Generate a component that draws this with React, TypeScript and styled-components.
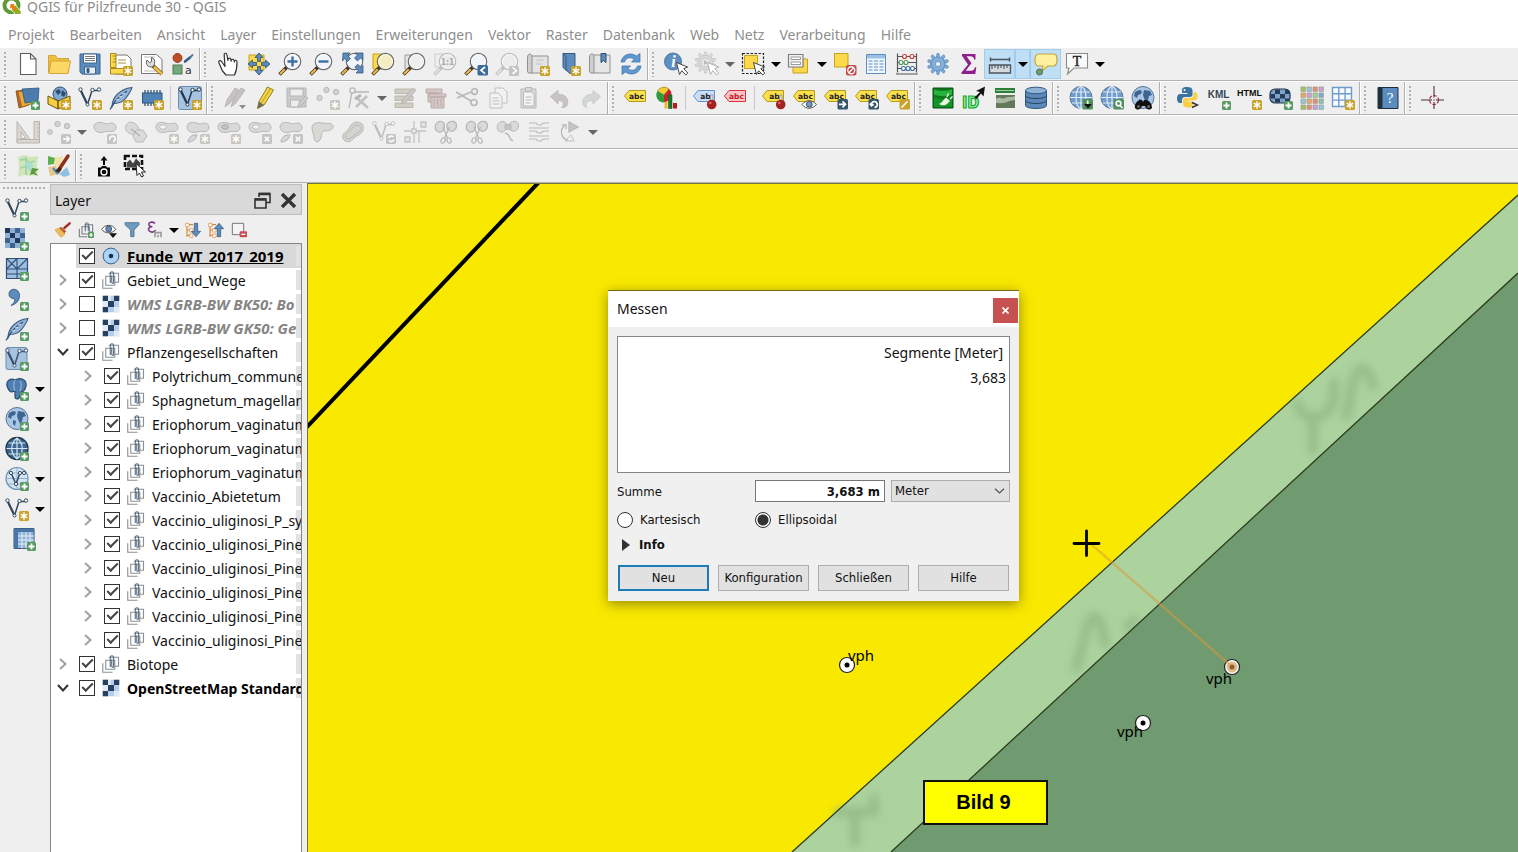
import React from "react";
import styled, { createGlobalStyle, css } from "styled-components";

const ui = `"Noto Sans", "Open Sans", sans-serif`;
const dialogFont = `"DejaVu Sans Condensed", "DejaVu Sans", sans-serif`;

const GlobalStyle = createGlobalStyle`
  *, *::before, *::after { box-sizing: border-box; }
  body { margin: 0; background: #efefef; color: #111; font-family: ${ui}; font-size: 14px; overflow: hidden; }
  button, input, select { font: inherit; color: inherit; margin: 0; }
`;

/* ---------- icon building blocks ---------- */

const BLUE = "#5a8cbe";
const NAVY = "#2f4d6e";
const YEL = "#fcd94a";

const Plus = () => (
  <g>
    <rect x="15" y="15" width="9" height="9" rx="1.5" fill="#589a63" />
    <path d="M19.500 16.500v6M16.500 19.500h6" stroke="#fff" strokeWidth="1.800" />
  </g>
);

const Star = ({ off }: { off?: boolean }) => (
  <g>
    <rect x="14" y="14" width="10" height="10" rx="1.500" fill={off ? "#c9c6bd" : "#c8a22a"} />
    <path
      d="M19 15.200v7.600M15.700 17.100l6.600 3.800M15.700 20.900l6.600-3.800"
      stroke="#fff"
      strokeWidth="1.400"
    />
  </g>
);

const OffBadge = ({ d }: { d: string }) => (
  <g>
    <rect x="14" y="14" width="10" height="10" rx="1.500" fill="#c4c4c4" />
    <path d={d} stroke="#fff" strokeWidth="1.600" fill="none" />
  </g>
);

const Cursor = ({ off }: { off?: boolean }) => (
  <path
    d="M12.500 10.500l3 12 2.300-3.800 4 4.300 2-1.900-4-4.400 3.800-1.700z"
    fill="#fff"
    stroke={off ? "#b0b0b0" : "#444"}
    strokeWidth="1"
    strokeLinejoin="round"
  />
);

const Mag = ({ lens = "#f1f5fb", off }: { lens?: string; off?: boolean }) => (
  <g>
    <path d="M9 15L1.500 22.500" stroke={off ? "#c2c2c2" : "#3a3020"} strokeWidth="3.600" />
    <path d="M6.800 17.200L2 22" stroke={off ? "#dedede" : "#f2b84a"} strokeWidth="2.200" />
    <circle cx="14.500" cy="9.500" r="8.200" fill={lens} stroke={off ? "#bcbcbc" : "#6b6b6b"} strokeWidth="1.200" />
    <circle cx="14.500" cy="9.500" r="6.900" fill="none" stroke="#fff" strokeOpacity=".7" strokeWidth="1" />
  </g>
);

const Tag = ({ text, fill = "#fbe04e", line = "#b59a1c", ink = "#222" }: { text: string; fill?: string; line?: string; ink?: string }) => (
  <g>
    <path d="M.5 10l4.500-5.500h16.500v11H5z" fill={fill} stroke={line} strokeWidth="1" strokeLinejoin="round" />
    <text x="12.500" y="12.500" fontSize="7.500" fontWeight="700" fontFamily='"DejaVu Sans", sans-serif' textAnchor="middle" fill={ink}>
      {text}
    </text>
  </g>
);

const Pin = () => (
  <g>
    <path d="M17.500 16v-7h2.500v7" fill="#ddd" stroke="#888" strokeWidth=".7" />
    <circle cx="18.700" cy="18.500" r="4.800" fill="#a32222" />
    <circle cx="17.300" cy="17" r="1.300" fill="#d66" />
  </g>
);

const DarkBadge = ({ d, fill = "#37566b" }: { d: string; fill?: string }) => (
  <g>
    <rect x="13.500" y="13" width="10.500" height="10.500" rx="1.500" fill={fill} />
    <path d={d} stroke="#fff" strokeWidth="1.700" fill="none" />
  </g>
);

const VShape = ({ c = "#34495e" }: { c?: string }) => (
  <g fill="none" stroke={c}>
    <path d="M2.500 4L9.500 18.500L14 4.500H21" strokeWidth="1.500" />
    <path d="M2.500 4L9.500 18.500" strokeWidth="2.200" />
    <g fill="#fff" strokeWidth="1">
      <circle cx="2.500" cy="3.500" r="1.700" />
      <circle cx="14.500" cy="4" r="1.700" />
      <circle cx="21" cy="3.500" r="1.700" />
      <circle cx="9.500" cy="18.500" r="1.500" />
    </g>
  </g>
);

const Feather = () => (
  <g>
    <path d="M3 21C3 12 10 3 23 1.500C22 6 19 9 17 12C14 16 9 17.500 5 17.500z" fill="#8fb2d6" stroke="#35587c" strokeWidth="1.100" />
    <path d="M1 23.500C4 17 10 10 18 5" fill="none" stroke="#35587c" strokeWidth="1.200" />
    <path d="M7 14l3-.5M10 11l3-.5M13 8l3-.5" stroke="#fff" strokeWidth=".8" />
  </g>
);

const Globe = ({ land }: { land?: boolean }) => (
  <g>
    <circle cx="12" cy="11.500" r="11" fill={land ? "#a9c6e6" : "#6f9ccb"} stroke="#5b7590" strokeWidth="1" />
    {land ? (
      <path
        d="M4 6l4-2 3 1-1 3-3 1-1 3-3-2zM8 13l3 1-1 5-2-2zM13 4l6 1 2 4-3 1-1 4-2 3-2-5-1-3z"
        fill="#3f6690"
      />
    ) : (
      <g fill="none" stroke="#dfeaf5" strokeWidth="1.200">
        <ellipse cx="12" cy="11.500" rx="5" ry="11" />
        <path d="M12 .5v22M1 11.500h22M3 6h18M3 17h18" />
      </g>
    )}
  </g>
);

const Blob = () => (
  <path
    d="M1 7C1 2 7 1.500 12 3.500C15 5 18 1.500 21.500 4C25 8 22 12.500 17 11.500C13 10.500 12 12.500 8 12.500C4 12.500 1 10.500 1 7z"
    fill="#d9d9d9"
    stroke="#b8b8b8"
    strokeWidth="1"
  />
);

const Scissors = () => (
  <g fill="none" stroke="#b5b5b5" strokeWidth="1.200">
    <path d="M2 4c3-4 8-3 8.500 1S8 13 4.500 12 .5 7 2 4zM14 3c3-3 8-2 8.500 2s-3 7-6.500 6-4-5.500-2-8z" fill="#dadada" />
    <path d="M9 7l4.500 11M15.500 7L10.500 18" />
    <ellipse cx="9" cy="20.500" rx="2" ry="2.800" transform="rotate(25 9 20.500)" />
    <ellipse cx="15" cy="20.500" rx="2" ry="2.800" transform="rotate(-25 15 20.500)" />
  </g>
);

const Checker = () => (
  <g>
    <rect x="0" y="1" width="20" height="20" fill="#8fb0d6" />
    {[0, 1, 2, 3].map((r) =>
      [0, 1, 2, 3].map((c) =>
        (r + c) % 2 === 0 ? (
          <rect key={`${r}${c}`} x={c * 5} y={1 + r * 5} width="5" height="5" fill={(r * 3 + c) % 4 ? "#3c648f" : "#1f3956"} />
        ) : null
      )
    )}
  </g>
);

const Gear = ({ fill, line }: { fill: string; line: string }) => (
  <g fill={fill} stroke={line} strokeWidth=".8">
    {[0, 36, 72, 108, 144, 180, 216, 252, 288, 324].map((a) => (
      <path key={a} d="M10.200 6l.8-4.500h2l.8 4.500z" transform={`rotate(${a} 12 12)`} />
    ))}
    <circle cx="12" cy="12" r="7" />
    <circle cx="12" cy="12" r="2.600" fill="#efefef" />
  </g>
);

const icons: Record<string, React.ReactNode> = {
  newProject: <path d="M4.500 1.500h10l5.500 5.500v15.500H4.500zM14.500 1.500V7H20" fill="#fff" stroke="#5e5e5e" strokeWidth="1.100" />,
  open: (
    <g stroke="#cf9f2c" strokeWidth=".9" strokeLinejoin="round">
      <path d="M1.500 3.500h7l2 3h11v14h-20z" fill="#f0bf3f" />
      <path d="M2 21.500L4 9h19.500l-2.500 12.500z" fill="#fdd866" />
    </g>
  ),
  save: (
    <g stroke="#3b658f" strokeWidth="1">
      <path d="M2 2h20v20H4l-2-2z" fill={BLUE} />
      <path d="M5.500 2h13v9h-13z" fill="#fff" />
      <path d="M7 4.500h10M7 6.500h10M7 8.500h10" stroke="#777" />
      <path d="M6.500 15h11v7h-11z" fill="#e7edf4" />
      <path d="M9 16.500h2v4H9z" fill={NAVY} />
    </g>
  ),
  layoutNew: (
    <g>
      <path d="M6 3h12l4 4v15H6z" fill="#fff" stroke="#777" />
      <path d="M1.500 1.500h5.500v14h-5.500z" fill={YEL} stroke="#a88a1c" />
      <path d="M1.500 16.500h16v5.500h-16z" fill={YEL} stroke="#a88a1c" />
      <path d="M3.500 4h3.500M4.500 7h2.500M3.500 10h3.500M9 8h8M9 11h8" stroke="#8b7520" strokeWidth=".8" />
      <Star />
    </g>
  ),
  layoutManager: (
    <g>
      <path d="M1.500 2.500h15l5.500 5v14h-20.500z" fill="#fff" stroke="#777" />
      <path d="M4 5h11M4 19h13" stroke="#bbb" />
      <path d="M13 14l9 8" stroke="#7d5b12" strokeWidth="4" />
      <path d="M14 15l8 7" stroke="#f1c34d" strokeWidth="2.400" />
      <path d="M7 8a4.500 4.500 0 0 0 4 7l2.500-.5 1-3a4.500 4.500 0 0 0-3-6v4l-2 1.200z" fill="#dcdcdc" stroke="#555" strokeWidth=".9" />
    </g>
  ),
  styles: (
    <g>
      <circle cx="6.500" cy="6" r="4.400" fill="#c14d27" stroke="#8b3114" />
      <path d="M14 9.500l5-4" stroke="#345b87" strokeWidth="2.600" strokeLinecap="round" />
      <path d="M18.500 6l3.500-3.500" stroke="#4c78a6" strokeWidth="1.800" />
      <rect x="2" y="13" width="9" height="9" fill="#76a77b" stroke="#4f7d55" />
      <text x="14" y="22" fontSize="11" fontFamily='"DejaVu Sans", sans-serif' fill="#333">a</text>
    </g>
  ),
  pan: (
    <path
      d="M9 14.500L5.500 9.500C4 7.500 2 9 3 11l3.500 8 3.500 4h8.500c2-4 2.500-8 2.500-12.500 0-3-2.500-2.800-2.700-.5 0-3.500-3-3.500-3.200-.8 0-4-3-3.800-3.200-.7L11 3C10.700.5 8 .8 8.200 3z"
      fill="#fff"
      stroke="#333"
      strokeWidth="1.200"
      strokeLinejoin="round"
    />
  ),
  panSelection: (
    <g>
      <path d="M2 3h15v15H2z" fill={YEL} stroke="#c3a31f" />
      <path
        d="M12 1l4 4.500h-2.500v4h-3v-4H8zM12 23l-4-4.500h2.500v-4h3v4H16zM1 12l4.500-4v2.500h4v3h-4V16zM23 12l-4.500-4v2.500h-4v3h4V16z"
        fill={BLUE}
        stroke={NAVY}
        strokeWidth=".8"
      />
    </g>
  ),
  zoomIn: <g><Mag /><path d="M14.500 4.500v10M9.500 9.500h10" stroke="#3d6fa3" strokeWidth="2.400" /></g>,
  zoomOut: <g><Mag /><path d="M9.500 9.500h10" stroke="#3d6fa3" strokeWidth="2.400" /></g>,
  zoomFull: (
    <g>
      <Mag />
      <path
        d="M3 1h7L7.500 3.500l3 3-3 3-3-3L2.500 9zM23 1v7l-2.500-2-3 3-3-3 3-3L15 1zM23 21h-7l2.300-2.300-3.500-3.500 3-3 3.500 3.500L23 13.500z"
        fill={BLUE}
        stroke={NAVY}
        strokeWidth=".7"
      />
    </g>
  ),
  zoomSelection: <g><path d="M2 2h12v15H2z" fill={YEL} stroke="#c3a31f" /><Mag lens="#f5edc0" /></g>,
  zoomLayer: <g><path d="M3 3h12v14H3z" fill="#e4e4e4" stroke="#999" /><Mag lens="#eeeeee" /></g>,
  zoomNative: (
    <g>
      <path d="M2 2h10v13H2z" fill="none" stroke="#ccc" />
      <Mag off lens="#ececec" />
      <text x="14.500" y="12.500" fontSize="8.500" fontWeight="700" textAnchor="middle" fontFamily='"DejaVu Sans Condensed", sans-serif' fill="#aaa">1:1</text>
    </g>
  ),
  zoomLast: <g><Mag /><DarkBadge fill="#3c6c9c" d="M21 15l-4 3.300 4 3.300" /></g>,
  zoomNext: <g><Mag off lens="#ececec" /><OffBadge d="M17.500 15.500l4 3.200-4 3.200" /></g>,
  newMap: (
    <g stroke="#909090">
      <path d="M5 4h17v17H5z" fill="#e3e3e3" />
      <path d="M1.500 5.500C1.500 1 6 1 6 5v16H3c-2 0-1.500-3-1.500-4z" fill="#cfcfcf" />
      <path d="M10 8h8M10 12h6" stroke="#c4c4c4" />
      <g stroke="none"><Star /></g>
    </g>
  ),
  newBookmark: <g><path d="M6 1.500h12v18l-5 2-7-6z" fill={BLUE} stroke={NAVY} strokeWidth=".9" /><path d="M6 1.500l3 3v14" fill="none" stroke={NAVY} strokeWidth=".8" /><Star /></g>,
  bookmarks: (
    <g stroke="#909090">
      <path d="M5 3h17v18H5z" fill="#e6e6e6" />
      <path d="M1.500 5C1.500 1 6 1 6 5v16H3c-2 0-1.500-3-1.500-4z" fill="#cfcfcf" />
      <path d="M13 1.500h5v9l-2.500-2-2.500 2z" fill={BLUE} stroke={NAVY} />
    </g>
  ),
  refresh: (
    <g fill="#5f97cf" stroke="#386ea6" strokeWidth=".7" strokeLinejoin="round">
      <path d="M2 10C3 3 11-.5 17.500 4L21 1.500V10h-8.500l2.700-2.700C11.500 4.500 7 5.500 5.500 10z" />
      <path d="M22 14c-1 7-9 10.500-15.500 6L3 22.500V14h8.500l-2.700 2.700c3.700 2.800 8.200 1.800 9.700-2.700z" />
    </g>
  ),
  identify: (
    <g>
      <circle cx="9" cy="9.500" r="8.500" fill="#5f8fc2" stroke="#4a77a8" />
      <text x="9.500" y="15" fontSize="16" fontStyle="italic" fontWeight="700" textAnchor="middle" fontFamily='"Liberation Serif", serif' fill="#fff">i</text>
      <Cursor />
    </g>
  ),
  action: (
    <g>
      <g transform="translate(-1.500 -1.500)"><Gear fill="#dedede" line="#c3c3c3" /></g>
      <circle cx="10.500" cy="10.500" r="4.500" fill="#e9e9e9" stroke="#c3c3c3" />
      <path d="M9 8l4 2.500L9 13z" fill="#bbb" />
      <Cursor off />
    </g>
  ),
  select: (
    <g>
      <path d="M3.500 3.500h13v13h-13z" fill={YEL} stroke="#c3a31f" />
      <path d="M1.500 1.500h21v20h-21z" fill="none" stroke="#222" strokeWidth="1.200" strokeDasharray="2.500 1.500" />
      <Cursor />
    </g>
  ),
  selectForm: (
    <g>
      <path d="M6 7h14.500v14H6z" fill={YEL} stroke="#c3a31f" />
      <path d="M1.500 2.500h14.500v12.500H1.500z" fill="#f3f3f3" stroke="#7d7d7d" strokeWidth="1.200" />
      <path d="M4 5h9.500v2.500H4zM4 10h9.500v2.500H4z" fill="#fff" stroke="#999" />
    </g>
  ),
  deselect: (
    <g>
      <path d="M1.500 1.500h13.500v13.500H1.500z" fill={YEL} stroke="#c3a31f" />
      <rect x="13" y="13" width="10.500" height="10.500" rx="2" fill="#c84a4a" />
      <circle cx="18.250" cy="18.250" r="3.500" fill="none" stroke="#fff" strokeWidth="1.300" />
      <path d="M15.800 20.700l5-5" stroke="#fff" strokeWidth="1.300" />
    </g>
  ),
  table: (
    <g>
      <path d="M2.500 2.500h19v19h-19z" fill="#f2f7fd" stroke="#5a8cbe" />
      <path d="M3 3h18v3.500H3z" fill="#9cc0e6" />
      <path d="M4.500 9h4M10 9h4M15.500 9h4M4.500 12h4M10 12h4M15.500 12h4M4.500 15h4M10 15h4M15.500 15h4M4.500 18h4M10 18h4M15.500 18h4" stroke="#5a8cbe" strokeWidth="1.200" />
    </g>
  ),
  abacus: (
    <g fill="none" strokeWidth="1.100">
      <path d="M2.500 1.500v19M21.500 1.500v19M1 22h22M3 4.500h18M3 10.500h18M3 16.500h18" stroke="#555" strokeWidth="1.200" />
      <g stroke="#c33" fill="#fff"><circle cx="9.500" cy="4.500" r="2" /><circle cx="17" cy="4.500" r="2" /></g>
      <g stroke="#4a9a50" fill="#fff"><circle cx="6" cy="10.500" r="2" /><circle cx="11" cy="10.500" r="2" /></g>
      <g stroke="#3c6c9c" fill="#fff"><circle cx="8.500" cy="16.500" r="2" /><circle cx="13" cy="16.500" r="2" /><circle cx="17.500" cy="16.500" r="2" /></g>
    </g>
  ),
  gear: <Gear fill="#82aeda" line="#5d8bbb" />,
  sigma: <path d="M5 2h13.500v5.500h-1.300c-.5-2.500-1.500-3.200-4-3.200H9.500l5 7-5.800 7.400h5c2.600 0 3.600-1 4.300-3.500h1.300L18.300 22H4.500v-1.500l6.500-8-6-8.700z" fill="#8f1f8f" />,
  measure: (
    <g stroke="#4c555e" fill="none">
      <path d="M2.500 7.500h19M2.500 5.500v4M21.500 5.500v4" strokeWidth="1.500" />
      <path d="M1.500 13h21v8h-21z" fill="#d5dade" strokeWidth="1.400" />
      <path d="M4 13v4M7 13v3M10 13v4M13 13v3M16 13v4M19 13v3" strokeWidth="1.100" />
    </g>
  ),
  mapTip: (
    <g>
      <path d="M5 2h14c4 0 4 2 4 6s-1 6-4 6h-5l-6 5 1-5H5c-3 0-4-2-4-6s1-6 4-6z" fill="#fff0a0" stroke="#c0a63c" strokeWidth="1.200" />
      <circle cx="5.500" cy="20" r="3" fill="#6f9c70" stroke="#47724b" />
    </g>
  ),
  annotation: (
    <g>
      <path d="M1.500 1.500h21v14.500H9l-6.500 6L4 16H1.500z" fill="#fafafa" stroke="#8b8b8b" strokeWidth="1.100" />
      <text x="12" y="13.500" fontSize="14" textAnchor="middle" fontFamily='"Liberation Serif", serif' fill="#222" stroke="#222" strokeWidth=".4">T</text>
    </g>
  ),
  sources: (
    <g strokeWidth=".8">
      <path d="M0 5l11-1 2 15-10 3z" fill="#c0632a" stroke="#7c4a14" />
      <path d="M2 6l12-3 4 14-12 4z" fill="#eaa93a" stroke="#9a6a18" />
      <path d="M6 3l17-1-1 13-13 2z" fill="#4c7cae" stroke="#2e567f" />
      <Plus />
    </g>
  ),
  geopackage: (
    <g>
      <circle cx="13" cy="8" r="7" fill="#7fa8d3" stroke={NAVY} />
      <path d="M8 5l4-2 2 3-3 3zM15 4l4 3-2 4-3-2z" fill={NAVY} />
      <path d="M1 10l10 5v8L1 18zM11 15l12-5v8l-12 5z" fill="#f3cf3e" stroke="#6b5510" strokeWidth="1" />
      <Star />
    </g>
  ),
  newVector: <g><VShape /><Star /></g>,
  newFeather: <g><Feather /><Star /></g>,
  chip: (
    <g>
      <path d="M5 4v16M8 4v16M11 4v16M14 4v16M17 4v16M20 4v16" stroke="#34526f" strokeWidth="1.300" />
      <rect x="2.500" y="7" width="19.500" height="10" fill="#4f82b6" stroke="#2e567f" />
      <Star />
    </g>
  ),
  virtualNew: (
    <g>
      <rect x=".5" y=".5" width="23" height="23" rx="2" fill="#a8c3df" stroke="#6a8cae" />
      <VShape c="#203a56" />
      <Star />
    </g>
  ),
  pencilsOff: (
    <g fill="#c6c2c2" stroke="#b3aeae" strokeWidth=".8">
      <path d="M2 21l2-7 8-12 4 2-9 13z" />
      <path d="M8 21l2-7 8-12 4 2-9 13z" />
      <path d="M16 19h7l-3.500 4z" fill="#8c8c8c" stroke="none" />
    </g>
  ),
  pencil: (
    <g>
      <path d="M3.500 22.500l1.500-7L13.500 1l6 3L10 19z" fill="#f5d849" stroke="#8f7a1d" strokeWidth="1" />
      <path d="M7.500 17L16.500 2.500" stroke="#c3a31f" strokeWidth="1.200" />
      <path d="M3.500 22.500l1.500-7 5 3.500z" fill="#6b6b5b" />
    </g>
  ),
  saveOff: (
    <g stroke="#b5b5b5">
      <path d="M2 2h19v19H2z" fill="#cbcbcb" />
      <path d="M5 3h13v7H5zM5.500 14h9v7h-9z" fill="#ededed" />
      <path d="M13 21l1-4 6-7 3 2-6 7z" fill="#d2c8c8" />
    </g>
  ),
  pointsOff: (
    <g fill="#d2d2d2" stroke="#bbb">
      <circle cx="3.500" cy="12" r="2.700" /><circle cx="10.500" cy="4" r="2.700" /><circle cx="20" cy="6" r="2.700" />
      <g stroke="none"><Star off /></g>
    </g>
  ),
  vertexOff: (
    <g fill="none" stroke="#b6b6b6" strokeWidth="1.300">
      <path d="M2 22L5 6h17" /><circle cx="5.500" cy="4.500" r="2.700" fill="#eee" />
      <path d="M9 21L20 10M10 12l11 10" strokeWidth="2.600" stroke="#c4c0c0" />
      <path d="M8 13l6-4" strokeWidth="3" />
    </g>
  ),
  multiOff: (
    <g fill="#d0cdc2" stroke="#b8b4a8" strokeWidth=".9">
      <path d="M2 3h18v4.500H2zM2 10h18v4.500H2zM2 17h18v4.500H2z" />
      <path d="M8 18l2-5L20 2l3 2-10 12z" fill="#c9c6c6" />
    </g>
  ),
  trashOff: (
    <g fill="#d5c6c6" stroke="#bdabab" strokeWidth="1">
      <path d="M2 3h16v4H2zM4 7h10v9H4z" /><path d="M5 8h17v3H5zM7 11h13v11H7z" /><path d="M10 13v7M13.500 13v7M17 13v7" />
    </g>
  ),
  cutOff: (
    <g fill="none" stroke="#b9b9b9" strokeWidth="1.700">
      <path d="M1 6l15 9M2 12l14-6" /><circle cx="19.500" cy="5.500" r="2.800" /><circle cx="19" cy="16.500" r="3" />
    </g>
  ),
  copyOff: (
    <g fill="#f2f2f2" stroke="#bfbfbf">
      <path d="M9 2h8l4 4v11H9z" /><path d="M4 7h8l4 4v11H4z" /><path d="M6.500 12h6M6.500 15h7M6.500 18h7" />
    </g>
  ),
  pasteOff: (
    <g fill="#d9d9d9" stroke="#b9b9b9">
      <path d="M4 3h15v19H4z" /><path d="M6.500 6h8l2.500 2.500V20h-10.500z" fill="#f4f4f4" /><path d="M8.500 1.500h6v3.500h-6z" /><path d="M8.500 11h6M8.500 14h6M8.500 17h5" />
    </g>
  ),
  undoOff: <path d="M2.500 10.500L10 4.500v4c8-.5 10.500 4 9.500 10-1 2.500-3.500 3.500-6 3 3.500-3 2.500-7-3.500-7v3.500z" fill="#c9c4c4" stroke="#bab4b4" strokeWidth=".8" />,
  redoOff: <path d="M21.500 10.500L14 4.500v4c-8-.5-11 4-10 10 .5 1.500 2 2.500 3.500 3-1.500-4.500 1-7 6.500-7v3.500z" fill="#d2d6d4" stroke="#c2c6c4" strokeWidth=".8" />,
  label: <Tag text="abc" />,
  diagram: (
    <g>
      <path d="M9 9L2.500 5A7.500 7.500 0 0 1 14 3z" fill="#f2cf2c" stroke="#8a7414" strokeWidth=".6" />
      <path d="M9 9l5-6a7.500 7.500 0 0 1-5 13z" fill="#c42626" />
      <path d="M9 9v7.500A7.500 7.500 0 0 1 2.500 5z" fill="#2f9a3d" />
      <path d="M9.500 16h3v6.500h-3z" fill="#f2b52c" /><path d="M13.500 9h3.500v13.500h-3.500z" fill="#187a2d" stroke="#0d4f1b" strokeWidth=".5" /><path d="M18 17h4v5.500h-4z" fill="#b01d1d" />
    </g>
  ),
  labelPinBlue: <g><Tag text="ab " fill="#c8defa" line="#5f93cc" /><Pin /></g>,
  labelRed: <Tag text="abc" fill="#ffc3c3" line="#dc2f3c" ink="#c2202c" />,
  labelPin: <g><Tag text="ab " /><Pin /></g>,
  labelEye: (
    <g>
      <Tag text="abc" />
      <path d="M9 18.500c4-5 10-5 14.500 0-4.500 5-10.500 5-14.500 0z" fill="#fff" stroke="#555" />
      <circle cx="16.300" cy="18.300" r="2.900" fill="#6e9bc9" stroke="#333" strokeWidth=".8" />
    </g>
  ),
  labelMove: <g><Tag text="abc" /><DarkBadge d="M15 18.300h6M18.500 15.300l3 3-3 3" /></g>,
  labelRotate: <g><Tag text="abc" /><DarkBadge d="M16.500 19.500a3 3 0 1 1 3 2M14.800 17.500l1.700 2.300 2-1.500" /></g>,
  labelEdit: <g><Tag text="abc" /><DarkBadge fill="#c8a22a" d="M15.500 21.500l6-6" /></g>,
  dbPlug: (
    <g>
      <path d="M2 2h20v20H2z" fill="#0d7a1c" stroke="#0a4f13" />
      <path d="M3 3.500c6 2 12 2 18 0v5c-6 2-12 2-18 0z" fill="#27b43c" />
      <path d="M3 11.500c6 2 12 2 18 0V21H3z" fill="#149329" />
      <path d="M8 18c2-1 3-2 4.500-4l2.500-2.500 4 3.500-3 3c-2 1.500-5 2-8 0z" fill="#e9f7dc" /><path d="M16 11l1.500-3.500M19 13l2.500-2.500" stroke="#e9f7dc" strokeWidth="1.400" />
    </g>
  ),
  idTool: (
    <g>
      <text x="0" y="21.500" fontSize="16" fontWeight="700" fontFamily='"DejaVu Sans Condensed", sans-serif' fill="#8ff09a" stroke="#0fa52a" strokeWidth="1.100">ID</text>
      <path d="M12 12l6-6-4-1 9-4.500-1.500 10-2.500-3-4.500 5.500z" fill="#111" />
    </g>
  ),
  photo: (
    <g>
      <path d="M2 2h20v5H2z" fill="#2e7d39" /><path d="M2 7h20v3H2z" fill="#e9eee6" /><path d="M3 9h19v13H3z" fill="#63795a" />
      <path d="M3 13c4-3 6 1 9-1s6 0 10-2v4c-6 0-8 4-19 3z" fill="#a9b8a0" /><path d="M3 4.500h18" stroke="#9bd09f" />
    </g>
  ),
  database: (
    <g fill="#5b88b8" stroke="#33587e" strokeWidth="1">
      <path d="M1.500 4.500v15c0 4 21 4 21 0v-15z" /><ellipse cx="12" cy="4.500" rx="10.500" ry="3.300" fill="#8fb2d8" />
      <path d="M1.500 9.500c0 4 21 4 21 0M1.500 14.500c0 4 21 4 21 0" fill="none" stroke="#27435f" />
    </g>
  ),
  globeDown: <g><Globe /><DarkBadge fill="#4e8f5c" d="M18.700 14.500v4" /><path d="M15 18h8l-4 4.500z" fill="#111" /></g>,
  globeSearch: <g><Globe /><DarkBadge fill="#4e8f5c" d="M20 19.500l2.500 2.500M20.800 17.500a2.300 2.300 0 1 1-4.600 0 2.300 2.300 0 0 1 4.600 0z" /></g>,
  globeBinocular: (
    <g>
      <Globe land />
      <path d="M4 22c-1-4 3-8 5-8h2l1 2 1-2h2c3 0 6 4 6 8-2 2.500-6 2-7-2h-3c-1 4-5 4.500-7 2z" fill="#111" />
      <circle cx="7.500" cy="20.500" r="1.500" fill="#666" /><circle cx="17.500" cy="20.500" r="1.500" fill="#666" />
    </g>
  ),
  python: (
    <g>
      <path d="M11 1C6 1 6 3 6 4.500V7h5.500v1H4C1.500 8 1 11 1 12.500 1 15 2 17 4 17h2v-3c0-2 1.500-3 3-3h5c1.500 0 2.500-1 2.500-2.500v-4C16.500 2 14.500 1 11 1z" fill="#3b72a4" />
      <circle cx="8.500" cy="4" r="1" fill="#fff" />
      <path d="M12 21.500c5 0 5-2 5-3.500v-2.500h-5.500v-1H18c2.500 0 3.500-2 3.500-4.500 0-2.500-1-4-3-4h-1v3c0 2-1.500 3-3 3h-5C8 12 7 13 7 14.500V18c0 2.500 2 3.500 5 3.500z" fill="#f9cf45" />
      <path d="M16 16.500l5.500 2.500-5.500 2.500" fill="none" stroke="#333" strokeWidth="1.400" />
    </g>
  ),
  kml: (
    <g>
      <text x="11.500" y="12" fontSize="10" fontWeight="700" textAnchor="middle" fontFamily='"Liberation Sans", sans-serif' fill="#34465a">KML</text>
      <Plus />
    </g>
  ),
  html: (
    <g>
      <text x="11.500" y="10" fontSize="9" fontWeight="700" textAnchor="middle" fontFamily='"Liberation Sans", sans-serif' fill="#111">HTML</text>
      <Star />
    </g>
  ),
  tiles: (
    <g>
      <rect x="1" y="3" width="20" height="14" rx="5" fill="#7fa2c9" stroke="#21364f" strokeWidth="1.200" />
      <path d="M6 3.500h5V8H6zM16 3.500h2c1.500 0 2.500 2 2.500 4.500H16zM1.500 8H6v4.500H1.500zM11 8h5v4.500h-5zM6 12.500h5v4H6zM16 12.500h4.500c0 3-2 4-4.500 4z" fill="#243d5c" />
      <Plus />
    </g>
  ),
  palette: (
    <g>
      {["#a3c45a", "#8fc9e8", "#e88d73", "#c9a0e0", "#f0a65f", "#c9a0e0", "#9fd49a", "#7ba9e0", "#8fc9e8", "#f0a65f", "#e88d73", "#84c6c0", "#a3c45a", "#e88d73", "#c9a0e0", "#8fc9e8"].map((c, i) => (
        <rect key={i} x={1 + (i % 4) * 6} y={1 + Math.floor(i / 4) * 6} width="4.300" height="4.300" fill={c} stroke="#9a9a8a" strokeWidth=".7" />
      ))}
    </g>
  ),
  gridNew: <g><path d="M1.500 1.500h19v19h-19zM1.500 7.800h19M1.500 14.100h19M7.800 1.500v19M14.100 1.500v19" fill="#f7fbff" stroke="#6f9ccb" strokeWidth="1.400" /><Star /></g>,
  help: (
    <g>
      <path d="M2 1.500h20v21H2z" fill="#5a8cbe" stroke="#1f2f40" /><path d="M2 1.500h4.500v21H2z" fill="#22313f" />
      <text x="14" y="17" fontSize="15" textAnchor="middle" fontFamily='"Liberation Serif", serif' fill="#fff">?</text>
    </g>
  ),
  crosshair: (
    <g fill="none">
      <circle cx="13" cy="14" r="4.500" stroke="#a83244" strokeWidth="1.200" strokeDasharray="3.500 1.500" />
      <path d="M0 14h11M15 14h8M13 0v11.500M13 16v7" stroke="#4a3535" strokeWidth="1.100" />
      <circle cx="13" cy="14" r=".8" fill="#a83244" />
    </g>
  ),
  squareOff: (
    <g fill="#dbd6d0" stroke="#b8b4b0">
      <path d="M1 1.500L16 22H1zM5 11.500l5 7H5z" fillRule="evenodd" /><path d="M1 19.500h22.500V23H1zM18 1.500h5.500v18H18z" /><path d="M21 4h2.500M21 8h2.500M21 12h2.500M21 16h2.500" />
    </g>
  ),
  movePointsOff: (
    <g fill="#d2d2d2" stroke="#bbb">
      <circle cx="3" cy="12" r="2.400" /><circle cx="10.500" cy="4" r="2.700" /><circle cx="20" cy="6" r="2.700" />
      <g stroke="none"><OffBadge d="M16 19h6M19.500 16.300l2.700 2.700-2.700 2.700" /></g>
    </g>
  ),
  blobRotate: <g><Blob /><OffBadge d="M17 20a2.800 2.800 0 1 1 3 1.500" /></g>,
  blobSimplify: (
    <g fill="#dadada" stroke="#bababa">
      <path d="M2 10C0 5 5 0 10 3c4 2 4 5 7 8 2 3-2 8-6 5-3-2-7-2-9-6z" /><path d="M12 10h7l4 6-4 6h-7l-3-6z" /><path d="M7 9l9 7" stroke="#999" />
    </g>
  ),
  blobRing: <g><Blob /><ellipse cx="8" cy="7" rx="3.500" ry="2.300" fill="#f3f3f3" stroke="#bbb" /><Star off /></g>,
  blobPart: <g><Blob /><path d="M2 22c0-4 4-8 9-7-1 4-4 7-9 7z" fill="#d6d6d6" stroke="#b3b3b3" /><Star off /></g>,
  blobFill: <g><Blob /><ellipse cx="8" cy="7" rx="3.500" ry="2.300" fill="#c4c4c4" stroke="#aaa" /><Star off /></g>,
  blobRingDel: <g><Blob /><ellipse cx="8" cy="7" rx="3.500" ry="2.300" fill="#f3f3f3" stroke="#bbb" /><OffBadge d="M16.800 16.800l4.400 4.400M21.200 16.800l-4.400 4.400" /></g>,
  blobPartDel: <g><Blob /><path d="M2 22c0-4 4-8 9-7-1 4-4 7-9 7z" fill="#d6d6d6" stroke="#b3b3b3" /><OffBadge d="M16.800 16.800l4.400 4.400M21.200 16.800l-4.400 4.400" /></g>,
  reshape: <path d="M2 8c0-5 5-6 10-5 4 1 10-1 11 3 1 4-5 5-9 5-3 1-2 5-4 9-3 4-6 1-6-3 0-3-2-5-2-9z" fill="#d8d8d4" stroke="#b8b8b5" />,
  offset: (
    <g fill="#d4d4d0" stroke="#b8b8b5">
      <path d="M3 20c-4-5 2-8 4-10 2-3 4-8 9-8 6 0 8 6 5 10s-5 3-8 6c-3 4-7 5-10 2z" />
      <path d="M5 18c-2-3 2-5 4-7 2-3 4-6 7-6 4 0 5 4 3 6s-5 3-7 5c-3 3-5 4-7 2z" />
    </g>
  ),
  splitV: <g><VShape c="#bdbdbd" /><OffBadge d="M16.500 18a3 3 0 0 1 5-1M22 19.500a3 3 0 0 1-5 1" /></g>,
  splitCross: (
    <g fill="none" stroke="#c2c2c2" strokeWidth="1.300">
      <path d="M1 11h22M11 1v22M16 11v12" /><path d="M9 9h4v4H9z" fill="#efefef" /><path d="M18 2h5v5h-5zM2 17h5v5H2z" fill="#e4e4e4" />
    </g>
  ),
  splitFeatures: <Scissors />,
  mergeOff: (
    <g fill="#dadada" stroke="#b9b9b9">
      <path d="M2 4c3-4 8-3 8.500 1S8 13 4.500 12 .5 7 2 4zM14 3c3-3 8-2 8.500 2s-3 7-6.500 6-4-5.500-2-8z" /><path d="M9 4.500h6v5H9z" fill="#c5c5c5" /><path d="M9 13c6 1 3 6 8 8" fill="none" strokeWidth="1.500" />
    </g>
  ),
  mergeAttr: <path d="M2 3h7l2 2h3l2-2h6M2 8h20M2 11h7l2 2h3l2-2h6M2 16h20M2 19h7l2 2h3l2-2h6" fill="none" stroke="#b9b9b9" strokeWidth="1.200" />,
  rotateSym: (
    <g fill="none" stroke="#b9b9b9" strokeWidth="1.300">
      <path d="M10 20C3 19 1 10 7 5" /><path d="M4 5h4v4" /><path d="M11 2v10l9-5z" fill="#c6c6c6" /><path d="M7 21h9l-3-6z" strokeWidth=".8" />
    </g>
  ),
  osm: (
    <g>
      <path d="M2 3l6-2 7 2 7-1-1 10 1 9-8 1-6-1-6 2 1-11z" fill="#cfe6bb" />
      <path d="M4 6l6-1 3 4 6-2M4 14l7-2 5 5M10 3v18" fill="none" stroke="#a3d3a6" strokeWidth="1.800" />
      <path d="M9 8l7 1 2 6-6 1z" fill="#aadfd4" />
      <path d="M14 21l2-7 7 1-4 3 3 4-5-2z" fill="#5f9a43" />
    </g>
  ),
  mapPaint: (
    <g>
      <path d="M1 2l7 2-1 6-6 1z" fill="#5bb04c" /><path d="M8 4l8-2-2 9-7 2z" fill="#f3e0a4" /><path d="M1 13l8-1 4 8-10 2z" fill="#e9c58c" />
      <path d="M12 20l8-7 3 8-6 2z" fill="#8fc0e4" /><path d="M6 14l5 6" stroke="#4a8fcc" strokeWidth="2.500" />
      <path d="M13 14l8-12" stroke="#8c2f1a" strokeWidth="3.500" strokeLinecap="round" /><path d="M8 17l4-4 3 2-3 4z" fill="#3f2417" />
    </g>
  ),
  camera: (
    <g fill="#0a0a0a">
      <path d="M12 2l3.500 4.500h-2.500V11h-2V6.500H8.500z" /><path d="M6 13.500h3l1-1.500h4l1 1.500h3v9H6z" />
      <circle cx="12" cy="18" r="3" fill="none" stroke="#fff" strokeWidth="1.300" />
    </g>
  ),
  snapshot: (
    <g>
      <path d="M2 2h17v13H2z" fill="none" stroke="#111" strokeWidth="2.600" strokeDasharray="5 2" />
      <path d="M4 13.500v-5l3-3 3 4 3-5 4 4v5z" fill="#444" />
      <path d="M13 9.500l1 12 2.500-2.500 2 4 2-1-2-4h4z" fill="#fff" stroke="#222" strokeLinejoin="round" />
    </g>
  ),
  addVector: <g><VShape /><Plus /></g>,
  addRaster: <g><Checker /><Plus /></g>,
  addMesh: (
    <g>
      <path d="M1.500 1.500h21v20h-21z" fill="#9fbfe0" stroke="#2e4f73" strokeWidth="1.200" />
      <path d="M1.500 12h21M12 1.500v20M1.500 1.500L12 12L22.500 1.500M1.500 12L12 1.500M1.500 17h21" fill="none" stroke="#2e4f73" strokeWidth="1.100" />
      <Plus />
    </g>
  ),
  addDelimited: <g><path d="M4 7c0-6.500 10.500-6.500 10.500 1.500 0 6-4.500 9-8.500 10 3.500-3 4.500-5 3-7-2.500 0-5-1-5-4.500z" fill={BLUE} stroke={NAVY} strokeWidth=".8" /><Plus /></g>,
  addFeather: <g><Feather /><Plus /></g>,
  addVirtual: <g><rect x="1" y=".5" width="21" height="22" rx="2" fill="#a8c3df" stroke="#6a8cae" /><VShape c="#3a5470" /><Plus /></g>,
  addPostgis: (
    <g>
      <path d="M2 9c-1-6 4-8 8-6 5-3 12-1 11 6-1 4-3 6-5 6l-1 4c-1 4-5 4-5 0v-5l-3 1c-3 0-4-3-5-6z" fill="#4f7fb2" stroke="#2a4a6c" strokeWidth="1.200" />
      <path d="M10 3c-2 4-1 8 0 11M15 4c2 3 1 7 0 10" fill="none" stroke="#a8c3df" />
      <Plus />
    </g>
  ),
  addGlobe: <g><Globe land /><Plus /></g>,
  addWms: (
    <g>
      <circle cx="12" cy="11.500" r="11" fill="#3b668f" stroke="#20384f" strokeWidth="1.400" />
      <path d="M12 1v21M1.500 11.500h21M3.500 6h17M3.500 17h17M12 1c-7 6-7 15 0 21M12 1c7 6 7 15 0 21" fill="none" stroke="#d5e4f2" strokeWidth="1.200" />
      <Plus />
    </g>
  ),
  addWfs: (
    <g>
      <circle cx="12" cy="11.500" r="11" fill="#d3e3f4" stroke="#6f93b8" strokeWidth="1.200" />
      <path d="M12 1v21M1.500 11.500h21M3.500 6h17M3.500 17h17" fill="none" stroke="#8fb0d2" />
      <path d="M6 6l5 11 4-11h3" fill="none" stroke="#34495e" strokeWidth="1.500" />
      <g fill="#fff" stroke="#34495e"><circle cx="6" cy="6" r="1.600" /><circle cx="15" cy="6" r="1.600" /><circle cx="19" cy="6" r="1.600" /><circle cx="11" cy="17" r="1.600" /></g>
      <Plus />
    </g>
  ),
  addTable: (
    <g>
      <path d="M2 1.500h20v20H2z" fill="#8fb2d6" stroke="#2e4f73" /><path d="M2 1.500h4v20H2zM2 1.500h20V5H2z" fill="#4a76a5" />
      <path d="M6 9h16M6 13h16M6 17h16M10 5v16.500M14 5v16.500M18 5v16.500" stroke="#e7f0f8" />
      <Plus />
    </g>
  ),
  brush: (
    <g>
      <path d="M14 9l8-7" stroke="#a02f26" strokeWidth="3.600" strokeLinecap="round" /><path d="M9 7l8 7-4 4-8-8z" fill="#b5622e" />
      <path d="M0 12l6-3 9 9-6 5z" fill="#f2b95c" stroke="#d29436" />
    </g>
  ),
  group: (
    <g fill="none" stroke="#8b9094" strokeWidth="1.500">
      <path d="M1 11v12h13M1 23v-4" /><path d="M5 7v12h12V7z" /><path d="M9 3h13v12h-5" />
      <path d="M11 16V4c0-4 4.500-4 4.500 0v10c0 3.500-2.500 3.500-2.500 0V6" stroke="#566d84" />
    </g>
  ),
  groupAdd: (
    <g>
      <g fill="none" stroke="#777d82" strokeWidth="1.600">
        <path d="M2 10v12h12" /><path d="M6 7v11h11V7z" /><path d="M10 4h12v11h-5" /><path d="M11 14V4c0-4 4.500-4 4.500 0v9" stroke="#566d84" />
      </g>
      <Plus />
    </g>
  ),
  eye: (
    <g>
      <path d="M1 11c5-8 16-8 21 0-5 7-16 7-21 0z" fill="#fff" stroke="#555" strokeWidth="1.500" /><circle cx="11.500" cy="10.500" r="4.500" fill="#5a8cbe" stroke="#333" />
      <path d="M12 17h12l-6 7z" fill="#111" />
    </g>
  ),
  filter: <path d="M1.500 1h21v3L15 12v10h-5V12L1.500 4z" fill="#6d9bbf" stroke="#4a708f" strokeWidth="1.300" />,
  epsilon: (
    <g>
      <path d="M12 2C8-1 2 0 3 4c0 2 2 3 5 3-5 0-7 3-5 6s8 3 10-1" fill="none" stroke="#7a3a86" strokeWidth="2.400" />
      <path d="M12 23v-7h9v7M16.500 23v-4" fill="none" stroke="#999" strokeWidth="2.400" />
    </g>
  ),
  expandAll: (
    <g>
      <path d="M3 2v20M3 4h9M3 12h8M3 20h9" fill="none" stroke="#d88a3a" strokeWidth="1.800" /><path d="M1 2h5v5H1zM7 10h5v5H7zM7 18h5v5H7z" fill="#fff" stroke="#d88a3a" />
      <path d="M14 2h5v12h4.500l-7 8-7-8H14z" fill={BLUE} stroke={NAVY} />
    </g>
  ),
  collapseAll: (
    <g>
      <path d="M3 2v20M3 4h9M3 12h8M3 20h9" fill="none" stroke="#d88a3a" strokeWidth="1.800" /><path d="M1 2h5v5H1zM7 10h5v5H7zM7 18h5v5H7z" fill="#fff" stroke="#d88a3a" />
      <path d="M14 22h5V10h4.500l-7-8-7 8H14z" fill={BLUE} stroke={NAVY} />
    </g>
  ),
  removeLayer: (
    <g>
      <path d="M2 2h17v17H2z" fill="#f4f4f4" stroke="#777" strokeWidth="1.500" /><rect x="13" y="14" width="11" height="9" rx="1.500" fill="#cc4b55" /><path d="M15.500 18.500h6" stroke="#fff" strokeWidth="2" />
    </g>
  ),
  wms: (
    <g>
      <path d="M1 1h22v22H1z" fill="#b5cdea" />
      <path d="M1 1h7v7H1zM16 1h7v7h-7zM8 8h8v8H8zM1 16h7v7H1z" fill="#26405e" /><path d="M1 8h7v8H1zM16 16h7v7h-7zM8 1h4v7H8z" fill="#dfeaf7" />
    </g>
  ),
  point: (
    <g>
      <circle cx="12" cy="12" r="10.500" fill="#a9d4f7" stroke="#3a5f80" strokeWidth="1.300" /><circle cx="12" cy="12" r="3" fill="#12314d" />
    </g>
  ),
};

const Drawing = styled.svg`
  flex: none;
  overflow: visible;
`;

const Icon = ({ name, size = 24 }: { name: string; size?: number }) => (
  <Drawing width={size} height={size} viewBox="0 0 24 24" aria-hidden="true">
    {icons[name]}
  </Drawing>
);

/* ---------- window frame ---------- */

const Window = styled.div`
  display: flex;
  flex-direction: column;
  height: 100vh;
  background: #efefef;
`;

const TitleBar = styled.header`
  display: flex;
  align-items: center;
  gap: 5px;
  height: 14px;
  flex: none;
  padding-left: 2px;
  background: #fff;
  color: #8c8c8c;
  line-height: 14px;
`;

const MenuBar = styled.nav`
  display: flex;
  align-items: center;
  gap: 15px;
  flex: none;
  height: 33px;
  padding: 8px 8px 0;
  background: #fff;
`;

const MenuLink = styled.a`
  color: #8e8e8e;
  text-decoration: none;
`;

const ToolRow = styled.div`
  display: flex;
  flex: none;
  height: 34px;
  border-top: 1px solid #fff;
  border-bottom: 1px solid #b4b4b4;
`;

const ToolGroup = styled.div`
  display: flex;
  align-items: center;
  padding-right: 1px;
  &:not(:last-child) {
    border-right: 1px solid #b0b0b0;
    box-shadow: 1px 0 0 #fff;
  }
`;

const Grip = styled.span`
  flex: none;
  width: 12px;
  height: 26px;
  background: radial-gradient(circle at 5px 2px, #b2b2b2 1px, transparent 1px) 0 0 / 12px 4px;
`;

const ToolButton = styled.button<{ $on?: boolean; $width?: number }>`
  display: flex;
  align-items: center;
  justify-content: center;
  flex: none;
  width: ${(p) => p.$width ?? 31}px;
  height: 30px;
  padding: 0;
  border: 0;
  background: none;
  ${(p) =>
    p.$on &&
    css`
      background: #bfdff6;
      box-shadow: inset 0 0 0 1px #a3cdec;
    `}
`;

const Separator = styled.span`
  flex: none;
  width: 1px;
  height: 24px;
  margin: 0 3px;
  background: #c9c9c9;
`;

const Arrow = styled.span<{ $off?: boolean }>`
  width: 0;
  height: 0;
  border: 5px solid transparent;
  border-top-color: ${(p) => (p.$off ? "#666" : "#000")};
  border-bottom: 0;
`;

/* A "v" entry is a drop-down arrow, "V" one for an inactive tool, "|" a separator; "+" marks an active tool. */
const renderTool = (entry: string, i: number) => {
  if (entry === "|") return <Separator key={i} />;
  const on = entry.startsWith("+");
  const name = on ? entry.slice(1) : entry;
  if (name === "v" || name === "V")
    return (
      <ToolButton key={i} $width={15} $on={on} aria-label="Mehr">
        <Arrow $off={name === "V"} />
      </ToolButton>
    );
  return (
    <ToolButton key={i} $on={on} aria-label={name}>
      <Icon name={name} />
    </ToolButton>
  );
};

const toolRows: string[][] = [
  [
    "newProject open save layoutNew layoutManager styles",
    "pan panSelection zoomIn zoomOut zoomFull zoomSelection zoomLayer zoomNative zoomLast zoomNext newMap newBookmark bookmarks refresh",
    "identify action V select v selectForm v deselect table abacus gear sigma +measure +v +mapTip annotation v",
  ],
  [
    "sources geopackage newVector newFeather chip | virtualNew",
    "pencilsOff pencil saveOff pointsOff vertexOff V multiOff trashOff cutOff copyOff pasteOff undoOff redoOff",
    "label diagram | labelPinBlue labelRed | labelPin labelEye labelMove labelRotate labelEdit",
    "dbPlug idTool photo database",
    "globeDown globeSearch globeBinocular",
    "python kml html tiles palette gridNew",
    "help",
    "crosshair",
  ],
  [
    "squareOff movePointsOff V blobRotate blobSimplify blobRing blobPart blobFill blobRingDel blobPartDel reshape offset splitV splitCross splitFeatures splitFeatures mergeOff mergeAttr rotateSym V",
  ],
  ["osm mapPaint", "camera snapshot"],
];

const menu = ["Projekt", "Bearbeiten", "Ansicht", "Layer", "Einstellungen", "Erweiterungen", "Vektor", "Raster", "Datenbank", "Web", "Netz", "Verarbeitung", "Hilfe"];

/* ---------- workspace ---------- */

const Workspace = styled.main`
  display: flex;
  flex: 1;
  min-height: 0;
`;

const SideBar = styled.aside`
  display: flex;
  flex-direction: column;
  flex: none;
  width: 50px;
  padding: 4px 0 0 1px;
`;

const SideGrip = styled.span`
  height: 7px;
  width: 46px;
  background: radial-gradient(circle at 3px 1px, #b2b2b2 1px, transparent 1px) 0 0 / 4px 3px repeat-x;
`;

const SideRow = styled.div<{ $inset?: boolean }>`
  display: flex;
  height: 30px;
  padding-left: ${(p) => (p.$inset ? 7 : 0)}px;
`;

const sideTools: [string, boolean][] = [
  ["addVector", false],
  ["addRaster", false],
  ["addMesh", false],
  ["addDelimited", false],
  ["addFeather", false],
  ["addVirtual", false],
  ["addPostgis", true],
  ["addGlobe", true],
  ["addWms", false],
  ["addWfs", true],
  ["newVector", true],
  ["addTable", false],
];

const Panel = styled.section`
  display: flex;
  flex-direction: column;
  flex: none;
  width: 252px;
  margin-right: 5px;
  padding-top: 1px;
`;

const PanelTitle = styled.div`
  display: flex;
  align-items: center;
  flex: none;
  height: 31px;
  padding: 1px 0 0 4px;
  border: 1px solid #bcbcbc;
  background: #d9d9d9;
  h2 { flex: 1; margin: 0; font-size: 14px; font-weight: 400; }
`;

const PanelButton = styled.button`
  display: flex;
  justify-content: center;
  width: 26px;
  padding: 0;
  border: 0;
  background: none;
`;

const PanelTools = styled.div`
  display: flex;
  align-items: center;
  flex: none;
  height: 28px;
  padding: 2px 0 0 1px;
`;

const Tree = styled.ul`
  flex: 1;
  min-height: 0;
  margin: 0;
  padding: 0;
  list-style: none;
  overflow: hidden;
  border: solid #82868c;
  border-width: 1px 1px 0;
  background: #fff;
`;

const TreeRow = styled.li<{ $depth: number; $selected?: boolean }>`
  display: flex;
  align-items: center;
  height: 24px;
  padding-left: ${(p) => p.$depth * 25}px;
  overflow: hidden;
  background:
    linear-gradient(#e2e2e2, #e2e2e2) right 0 center / 5px 20px no-repeat,
    ${(p) => (p.$selected ? "linear-gradient(90deg, #fff 25px, #d9d9d9 25px)" : "#fff")};
`;

const Expander = styled.button`
  display: flex;
  align-items: center;
  justify-content: center;
  flex: none;
  width: 24px;
  height: 24px;
  padding: 0;
  border: 0;
  background: none;
`;

const LayerLabel = styled.label<{ $look?: "active" | "muted" | "bold" }>`
  display: flex;
  align-items: center;
  flex: none;
  gap: 7px;
  padding-left: 4px;
  white-space: nowrap;
  ${(p) => p.$look && css`font-weight: 700; color: #000;`}
  ${(p) => p.$look === "active" && css`font-size: 15px; text-decoration: underline;`}
  ${(p) => p.$look === "muted" && css`font-size: 15px; font-style: italic; color: #858585;`}
`;

const CheckBox = styled.input.attrs({ type: "checkbox" })`
  appearance: none;
  display: flex;
  justify-content: center;
  flex: none;
  width: 16px;
  height: 16px;
  border: 1px solid #333;
  background: #fff;
  &:checked::before {
    content: "";
    width: 11px;
    height: 6px;
    margin-top: 2px;
    border: solid #444;
    border-width: 0 0 2px 2px;
    transform: rotate(-45deg);
  }
`;

type Layer = { name: string; icon: string; depth?: number; state?: "open" | "closed"; off?: boolean; look?: "active" | "muted" | "bold" };

const layers: Layer[] = [
  { name: "Funde_WT_2017_2019", icon: "point", look: "active" },
  { name: "Gebiet_und_Wege", icon: "group", state: "closed" },
  { name: "WMS LGRB-BW BK50: Bo", icon: "wms", state: "closed", off: true, look: "muted" },
  { name: "WMS LGRB-BW GK50: Ge", icon: "wms", state: "closed", off: true, look: "muted" },
  { name: "Pflanzengesellschaften", icon: "group", state: "open" },
  ...[
    "Polytrichum_commune",
    "Sphagnetum_magellanici",
    "Eriophorum_vaginatum",
    "Eriophorum_vaginatum",
    "Eriophorum_vaginatum",
    "Vaccinio_Abietetum",
    "Vaccinio_uliginosi_P_sylv",
    "Vaccinio_uliginosi_Pinetum",
    "Vaccinio_uliginosi_Pinetum",
    "Vaccinio_uliginosi_Pinetum",
    "Vaccinio_uliginosi_Pinetum",
    "Vaccinio_uliginosi_Pinetum",
  ].map((name): Layer => ({ name, icon: "group", depth: 1, state: "closed" })),
  { name: "Biotope", icon: "group", state: "closed" },
  { name: "OpenStreetMap Standard", icon: "wms", state: "open", look: "bold" },
];

/* ---------- map ---------- */

const MapArea = styled.section`
  position: relative;
  flex: 1;
  min-width: 0;
  overflow: hidden;
  background: #f9e900;
  border: solid #77763a;
  border-width: 1px 0 0 1px;
`;

const MapCanvas = styled.svg`
  display: block;
  width: 100%;
  height: 100%;
  font-family: ${ui};
  font-size: 15px;
`;

const Caption = styled.div`
  position: absolute;
  left: 615px;
  top: 596px;
  display: flex;
  align-items: center;
  justify-content: center;
  width: 125px;
  height: 45px;
  padding-right: 4px;
  border: 2px solid #111;
  background: #ff0;
  color: #000;
  font: 700 20px "Liberation Sans", sans-serif;
`;

const MapPoint = ({ x, y, picked }: { x: number; y: number; picked?: boolean }) => (
  <g>
    <circle cx={x} cy={y} r="7.500" fill="#fff" stroke="#222" strokeWidth="1.200" />
    {picked && <circle cx={x} cy={y} r="5.500" fill="#e2b98a" />}
    <circle cx={x} cy={y} r="2.500" fill={picked ? "#8a6232" : "#000"} />
  </g>
);

/* ---------- measure dialog ---------- */

const Dialog = styled.form`
  position: absolute;
  left: 300px;
  top: 106px;
  width: 411px;
  border-top: 1px solid #6e6a1c;
  background: #f0f0f0;
  box-shadow: 0 3px 12px rgba(70, 60, 0, 0.55);
  font-family: ${dialogFont};
  font-size: 13px;
  line-height: 16px;
`;

const DialogTitle = styled.div`
  display: flex;
  align-items: center;
  justify-content: space-between;
  height: 36px;
  padding: 0 1px 0 9px;
  background: #fff;
  font-family: ${ui};
  h1 { margin: 0; font-size: 14px; font-weight: 400; }
`;

const CloseButton = styled.button`
  display: flex;
  align-items: center;
  justify-content: center;
  width: 25px;
  height: 25px;
  margin-top: 3px;
  padding: 0;
  border: 0;
  background: #c75050;
`;

const DialogBody = styled.div`
  display: flex;
  flex-direction: column;
  padding: 9px 9px 10px;
`;

const SegmentBox = styled.div`
  height: 137px;
  padding-top: 3px;
  border: 1px solid #82868c;
  background: #fff;
`;

const SegmentTable = styled.table`
  width: 100%;
  border-collapse: collapse;
  font-family: ${ui};
  font-size: 14px;
  line-height: 25px;
  th { padding: 0 6px 0 0; font-weight: 400; text-align: right; }
  td { padding: 0 3px 0 0; text-align: right; }
`;

const SumRow = styled.div`
  display: grid;
  grid-template-columns: 132px 130px 1fr;
  column-gap: 6px;
  align-items: center;
  margin-top: 7px;
  label { padding-top: 2px; }
`;

const SumField = styled.input`
  width: 100%;
  height: 22px;
  padding: 0 4px;
  border: 1px solid #777;
  background: #fff;
  font-weight: 700;
  text-align: right;
`;

const UnitBox = styled.div`
  display: grid;
  align-items: center;
  select, svg { grid-area: 1 / 1; }
  svg { justify-self: end; margin-right: 5px; pointer-events: none; }
`;

const UnitSelect = styled.select`
  appearance: none;
  width: 100%;
  height: 22px;
  padding: 0 3px;
  border: 1px solid #adadad;
  border-radius: 0;
  background: #e1e1e1;
`;

const RadioRow = styled.div`
  display: grid;
  grid-template-columns: 138px 1fr;
  margin-top: 10px;
`;

const RadioLabel = styled.label`
  display: flex;
  align-items: center;
  gap: 7px;
`;

const Radio = styled.input.attrs({ type: "radio" })`
  appearance: none;
  flex: none;
  width: 16px;
  height: 16px;
  border: 1px solid #333;
  border-radius: 50%;
  background: #fff;
  &:checked { background: radial-gradient(circle, #333 5px, #fff 6px); }
`;

const InfoToggle = styled.button`
  display: flex;
  align-items: center;
  align-self: flex-start;
  gap: 9px;
  height: 16px;
  margin-top: 9px;
  padding: 0 0 0 5px;
  border: 0;
  background: none;
  font-weight: 700;
`;

const ButtonRow = styled.div`
  display: grid;
  grid-template-columns: repeat(4, 1fr);
  gap: 9px;
  margin-top: 12px;
  padding: 0 1px;
`;

const DialogButton = styled.button<{ $primary?: boolean }>`
  height: 26px;
  padding: 0;
  border: ${(p) => (p.$primary ? "2px solid #1f7ab8" : "1px solid #adadad")};
  background: #e1e1e1;
`;

const MeasureDialog = () => (
  <Dialog aria-label="Messen" onSubmit={(e) => e.preventDefault()}>
    <DialogTitle>
      <h1>Messen</h1>
      <CloseButton type="button" aria-label="Dialog beenden">
        <svg width="7" height="7" viewBox="0 0 7 7"><path d="M.5.5l6 6M6.500.5l-6 6" stroke="#fff" strokeWidth="1.600" /></svg>
      </CloseButton>
    </DialogTitle>
    <DialogBody>
      <SegmentBox>
        <SegmentTable>
          <thead><tr><th scope="col">Segmente [Meter]</th></tr></thead>
          <tbody><tr><td>3,683</td></tr></tbody>
        </SegmentTable>
      </SegmentBox>
      <SumRow>
        <label htmlFor="sum">Summe</label>
        <SumField id="sum" readOnly value="3,683 m" />
        <UnitBox>
          <UnitSelect aria-label="Einheit" defaultValue="Meter"><option>Meter</option></UnitSelect>
          <svg width="11" height="6" viewBox="0 0 11 6"><path d="M1 .7l4.500 4.300L10 .7" fill="none" stroke="#555" strokeWidth="1.200" /></svg>
        </UnitBox>
      </SumRow>
      <RadioRow>
        <RadioLabel><Radio name="mode" />Kartesisch</RadioLabel>
        <RadioLabel><Radio name="mode" defaultChecked />Ellipsoidal</RadioLabel>
      </RadioRow>
      <InfoToggle type="button" aria-expanded="false">
        <svg width="8" height="12" viewBox="0 0 8 12"><path d="M0 0l8 6-8 6z" fill="#333" /></svg>
        Info
      </InfoToggle>
      <ButtonRow>
        <DialogButton $primary>Neu</DialogButton>
        <DialogButton type="button">Konfiguration</DialogButton>
        <DialogButton type="button">Schließen</DialogButton>
        <DialogButton type="button">Hilfe</DialogButton>
      </ButtonRow>
    </DialogBody>
  </Dialog>
);

export default function App() {
  return (
    <Window>
      <GlobalStyle />
      <TitleBar>
        <Drawing width="20" height="20" viewBox="0 0 20 20" aria-hidden="true">
          <circle cx="9.500" cy="8.500" r="7" fill="none" stroke="#5f9a35" strokeWidth="4" />
          <path d="M10 8l3.500.3L19 14v5h-4.500L9.500 13z" fill="#93b023" stroke="#fff" strokeWidth=".8" />
          <path d="M8.500 7h4l-1 1.500 3.500 3.500-2 2-3.500-3.500L8 12z" fill="#ee7913" />
        </Drawing>
        QGIS für Pilzfreunde 30 - QGIS
      </TitleBar>
      <MenuBar>
        {menu.map((m) => (
          <MenuLink key={m} href="#">{m}</MenuLink>
        ))}
      </MenuBar>
      {toolRows.map((row, r) => (
        <ToolRow key={r}>
          {row.map((group, g) => (
            <ToolGroup key={g}>
              <Grip />
              {group.split(" ").map(renderTool)}
            </ToolGroup>
          ))}
        </ToolRow>
      ))}
      <Workspace>
        <SideBar>
          <SideGrip />
          {sideTools.map(([name, more]) => (
            <SideRow key={name} $inset={name === "addTable"}>
              {renderTool(name, 0)}
              {more && renderTool("v", 1)}
            </SideRow>
          ))}
        </SideBar>
        <Panel>
          <PanelTitle>
            <h2>Layer</h2>
            <PanelButton aria-label="Panel lösen">
              <svg width="17" height="17" viewBox="0 0 17 17"><path d="M5 5V1.500h11v9h-4M1 7h11v9H1z" fill="none" stroke="#333" strokeWidth="1.600" /><path d="M5 2h11M1 7.500h11" stroke="#333" strokeWidth="2.600" /></svg>
            </PanelButton>
            <PanelButton aria-label="Panel ausblenden">
              <svg width="17" height="17" viewBox="0 0 17 17"><path d="M2 2l13 13M15 2L2 15" stroke="#333" strokeWidth="3.400" /></svg>
            </PanelButton>
          </PanelTitle>
          <PanelTools>
            {["brush", "groupAdd", "eye", "filter", "epsilon"].map((n) => (
              <ToolButton key={n} $width={23} aria-label={n}><Icon name={n} size={16} /></ToolButton>
            ))}
            {renderTool("v", 9)}
            {["expandAll", "collapseAll", "removeLayer"].map((n) => (
              <ToolButton key={n} $width={23} aria-label={n}><Icon name={n} size={16} /></ToolButton>
            ))}
          </PanelTools>
          <Tree>
            {layers.map((l, i) => (
              <TreeRow key={i} $depth={l.depth ?? 0} $selected={l.look === "active"}>
                <Expander aria-label={l.state === "open" ? "Einklappen" : "Ausklappen"}>
                  {l.state === "closed" && (
                    <svg width="8" height="12" viewBox="0 0 8 12"><path d="M1 1l5.500 5L1 11" fill="none" stroke="#a0a0a0" strokeWidth="2" /></svg>
                  )}
                  {l.state === "open" && (
                    <svg width="12" height="8" viewBox="0 0 12 8"><path d="M1 1l5 5.500L11 1" fill="none" stroke="#333" strokeWidth="2" /></svg>
                  )}
                </Expander>
                <LayerLabel $look={l.look}>
                  <CheckBox defaultChecked={!l.off} />
                  <Icon name={l.icon} size={18} />
                  <span>{l.name}</span>
                </LayerLabel>
              </TreeRow>
            ))}
          </Tree>
        </Panel>
        <MapArea>
          <MapCanvas viewBox="308 184 1210 668" preserveAspectRatio="xMinYMin slice">
            <defs>
              <filter id="soft" x="-20%" y="-20%" width="140%" height="140%"><feGaussianBlur stdDeviation="4" /></filter>
            </defs>
            <path d="M792 852L1518 195V273L891 852z" fill="#acd29e" />
            <g fill="none" stroke="#86ae7a" strokeOpacity=".6" strokeWidth="9" filter="url(#soft)">
              <path d="M1296 400C1300 424 1330 424 1334 396V378M1313 420V455M1346 420L1352 386C1358 362 1368 362 1374 390" />
              <path d="M1075 672L1084 640C1090 608 1100 606 1106 648M1124 630L1138 618" />
              <path d="M834 812H874V794M855 814V846" />
            </g>
            <path d="M891 852L1518 273V852z" fill="#709a70" />
            <path d="M792 852L1518 195M891 852L1518 273" stroke="#2c3c1e" strokeWidth="1.300" />
            <path d="M306 428L539 182" stroke="#000" strokeWidth="4" />
            <MapPoint x={847} y={665} />
            <MapPoint x={1143} y={723} />
            <MapPoint x={1232} y={667} picked />
            <path d="M1092 545L1230 665" stroke="#d79a38" strokeOpacity=".5" strokeWidth="2.400" />
            <path d="M1086.500 531v24.500M1074 543.500h25" stroke="#000" strokeWidth="2.800" strokeLinecap="round" />
            <text x="848" y="661">vph</text>
            <text x="1206" y="684">vph</text>
            <text x="1117" y="737">vph</text>
          </MapCanvas>
          <MeasureDialog />
          <Caption>Bild 9</Caption>
        </MapArea>
      </Workspace>
    </Window>
  );
}
